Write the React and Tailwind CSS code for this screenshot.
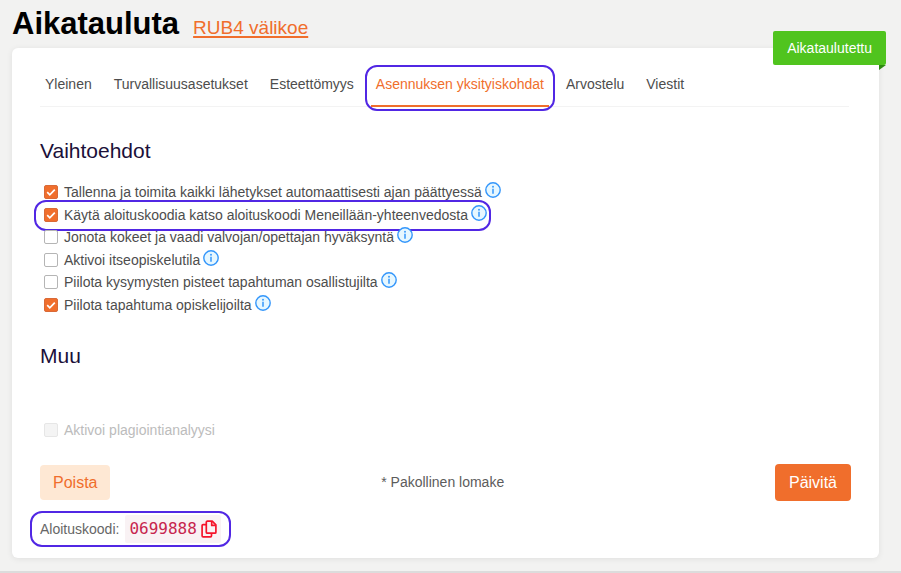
import React, { useState } from "react";

const tabs = [
  "Yleinen",
  "Turvallisuusasetukset",
  "Esteettömyys",
  "Asennuksen yksityiskohdat",
  "Arvostelu",
  "Viestit",
];

const initialOptions = [
  { id: "autosave", label: "Tallenna ja toimita kaikki lähetykset automaattisesti ajan päättyessä", checked: true },
  { id: "startcode", label: "Käytä aloituskoodia katso aloituskoodi Meneillään-yhteenvedosta", checked: true, marked: true },
  { id: "queue", label: "Jonota kokeet ja vaadi valvojan/opettajan hyväksyntä", checked: false },
  { id: "selfstudy", label: "Aktivoi itseopiskelutila", checked: false },
  { id: "hidescore", label: "Piilota kysymysten pisteet tapahtuman osallistujilta", checked: false },
  { id: "hideevent", label: "Piilota tapahtuma opiskelijoilta", checked: true },
];

function Marker({ className }) {
  return <span className={`pointer-events-none absolute border-2 border-[#5127e4] ${className}`} />;
}

function InfoIcon() {
  return (
    <svg viewBox="0 0 16 16" className="size-4 shrink-0" aria-hidden="true">
      <circle cx="8" cy="8" r="7.2" fill="#e6f7ff" stroke="#3396fb" strokeWidth="1.4" />
      <circle cx="8" cy="4.7" r="0.95" fill="#3396fb" />
      <path d="M8 6.7v5" stroke="#3396fb" strokeWidth="1.5" />
    </svg>
  );
}

function CopyIcon() {
  return (
    <svg viewBox="0 0 16 18" className="h-[18px] w-4" fill="none" stroke="#f5142b" strokeWidth="1.7" strokeLinejoin="round" aria-hidden="true">
      <path d="M6.3 1.2h4.9l3.7 3.7v7.3a1 1 0 0 1-1 1H6.3a1 1 0 0 1-1-1v-10a1 1 0 0 1 1-1z" />
      <path d="M10.7 1.4v4h4" />
      <path d="M5.2 4.6H2.1a1 1 0 0 0-1 1v10.2a1 1 0 0 0 1 1h7.4a1 1 0 0 0 1-1v-2.4" />
    </svg>
  );
}

function Checkbox({ id, ...props }) {
  return (
    <span className="relative flex size-3.5 shrink-0">
      <input
        id={id}
        type="checkbox"
        className="peer size-3.5 appearance-none rounded-xs border border-[#b5b5b5] bg-white checked:border-[#d96a38] checked:bg-[#f06e2c] disabled:border-[#e6e6e6] disabled:bg-[#f4f4f4]"
        {...props}
      />
      <svg viewBox="0 0 14 14" className="pointer-events-none absolute inset-0 hidden size-3.5 peer-checked:block" aria-hidden="true">
        <path d="M3.2 7.2l2.6 2.6 5-5.2" fill="none" stroke="#fff" strokeWidth="1.7" />
      </svg>
    </span>
  );
}

export default function App() {
  const [activeTab, setActiveTab] = useState(3);
  const [options, setOptions] = useState(initialOptions);

  const toggle = (id) => {
    setOptions(options.map((o) => (o.id === id ? { ...o, checked: !o.checked } : o)));
  };

  return (
    <div className="flex min-h-screen flex-col border-b-2 border-[#dcdcdc] bg-[#f2f2f1] pr-[22px] pb-[13px] pl-3 font-['Liberation_Sans',Arial,sans-serif] text-[14px] text-[#4d4d4d]">
      <header className="flex h-12 items-baseline gap-3.5 pt-[5px]">
        <h1 className="text-[31px] leading-[38px] font-bold text-black">Aikatauluta</h1>
        <a href="#" className="text-[19px] text-[#f06e2c] underline decoration-2 underline-offset-2">RUB4 välikoe</a>
      </header>

      <main className="relative flex-1 rounded-md bg-white pt-4 pr-7 pb-3 pl-7 shadow-[0_1px_6px_rgba(0,0,0,0.08)]">
        <div className="absolute -top-[17px] -right-[7px]">
          <div className="rounded-xs bg-[#50c41e] px-3.5 py-[7px] leading-5 text-white">Aikataulutettu</div>
          <svg viewBox="0 0 7 5" className="ml-auto h-[5px] w-[7px]" aria-hidden="true">
            <path d="M0 0h7L0 5z" fill="#2f8a12" />
          </svg>
        </div>

        <nav className="mr-0.5 flex gap-3 border-b border-[#f3f3f3]">
          {tabs.map((tab, i) => (
            <button
              key={tab}
              type="button"
              onClick={() => setActiveTab(i)}
              className={`relative -mb-px h-[43px] border-b-2 px-[5px] whitespace-nowrap ${
                i === activeTab ? "border-[#f06e2c] text-[#f06e2c]" : "border-transparent"
              }`}
            >
              {tab}
              {i === 3 && <Marker className="-inset-x-1.5 top-px -bottom-1.5 rounded-xl" />}
            </button>
          ))}
        </nav>

        <section className="mt-8">
          <h2 className="text-[21px] leading-6 text-[#1b1039]">Vaihtoehdot</h2>
          <ul className="mt-[18px] grid h-[135px] grid-rows-6">
            {options.map((o) => (
              <li key={o.id} className="relative flex items-center gap-1.5 pl-1">
                <Checkbox id={o.id} checked={o.checked} onChange={() => toggle(o.id)} />
                <label htmlFor={o.id} className="flex items-start gap-[3px]">
                  <span className="leading-5">{o.label}</span>
                  <InfoIcon />
                </label>
                {o.marked && <Marker className="-top-1 -left-1.5 h-[31px] w-[457px] rounded-xl" />}
              </li>
            ))}
          </ul>
        </section>

        <section className="mt-7">
          <h2 className="text-[21px] leading-6 text-[#1b1039]">Muu</h2>
          <div className="mt-[52px] flex items-center gap-1.5 pl-1 text-[#bcbcbc]">
            <Checkbox id="plagiarism" disabled />
            <label htmlFor="plagiarism" className="leading-5">Aktivoi plagiointianalyysi</label>
          </div>
        </section>

        <div className="mt-6 flex items-center justify-between">
          <button type="button" className="h-[35px] rounded-sm bg-[#fee8d4] px-[13px] text-base text-[#f06e2c]">Poista</button>
          <span className="text-[#5c5c5c]">* Pakollinen lomake</span>
          <button type="button" className="h-[37px] rounded-sm bg-[#f06e2c] px-3.5 text-base text-white">Päivitä</button>
        </div>

        <div className="relative mt-3.5 flex w-fit items-center gap-1.5 text-[#666]">
          Aloituskoodi:
          <span className="flex h-7 items-center gap-1 rounded-xs bg-[#f9f2f4] px-1">
            <code className="font-['DejaVu_Sans_Mono',monospace] text-[16px] text-[#c7254e]">0699888</code>
            <button type="button" aria-label="Kopioi">
              <CopyIcon />
            </button>
          </span>
          <Marker className="-inset-x-2.5 -inset-y-1 rounded-xl" />
        </div>
      </main>
    </div>
  );
}
